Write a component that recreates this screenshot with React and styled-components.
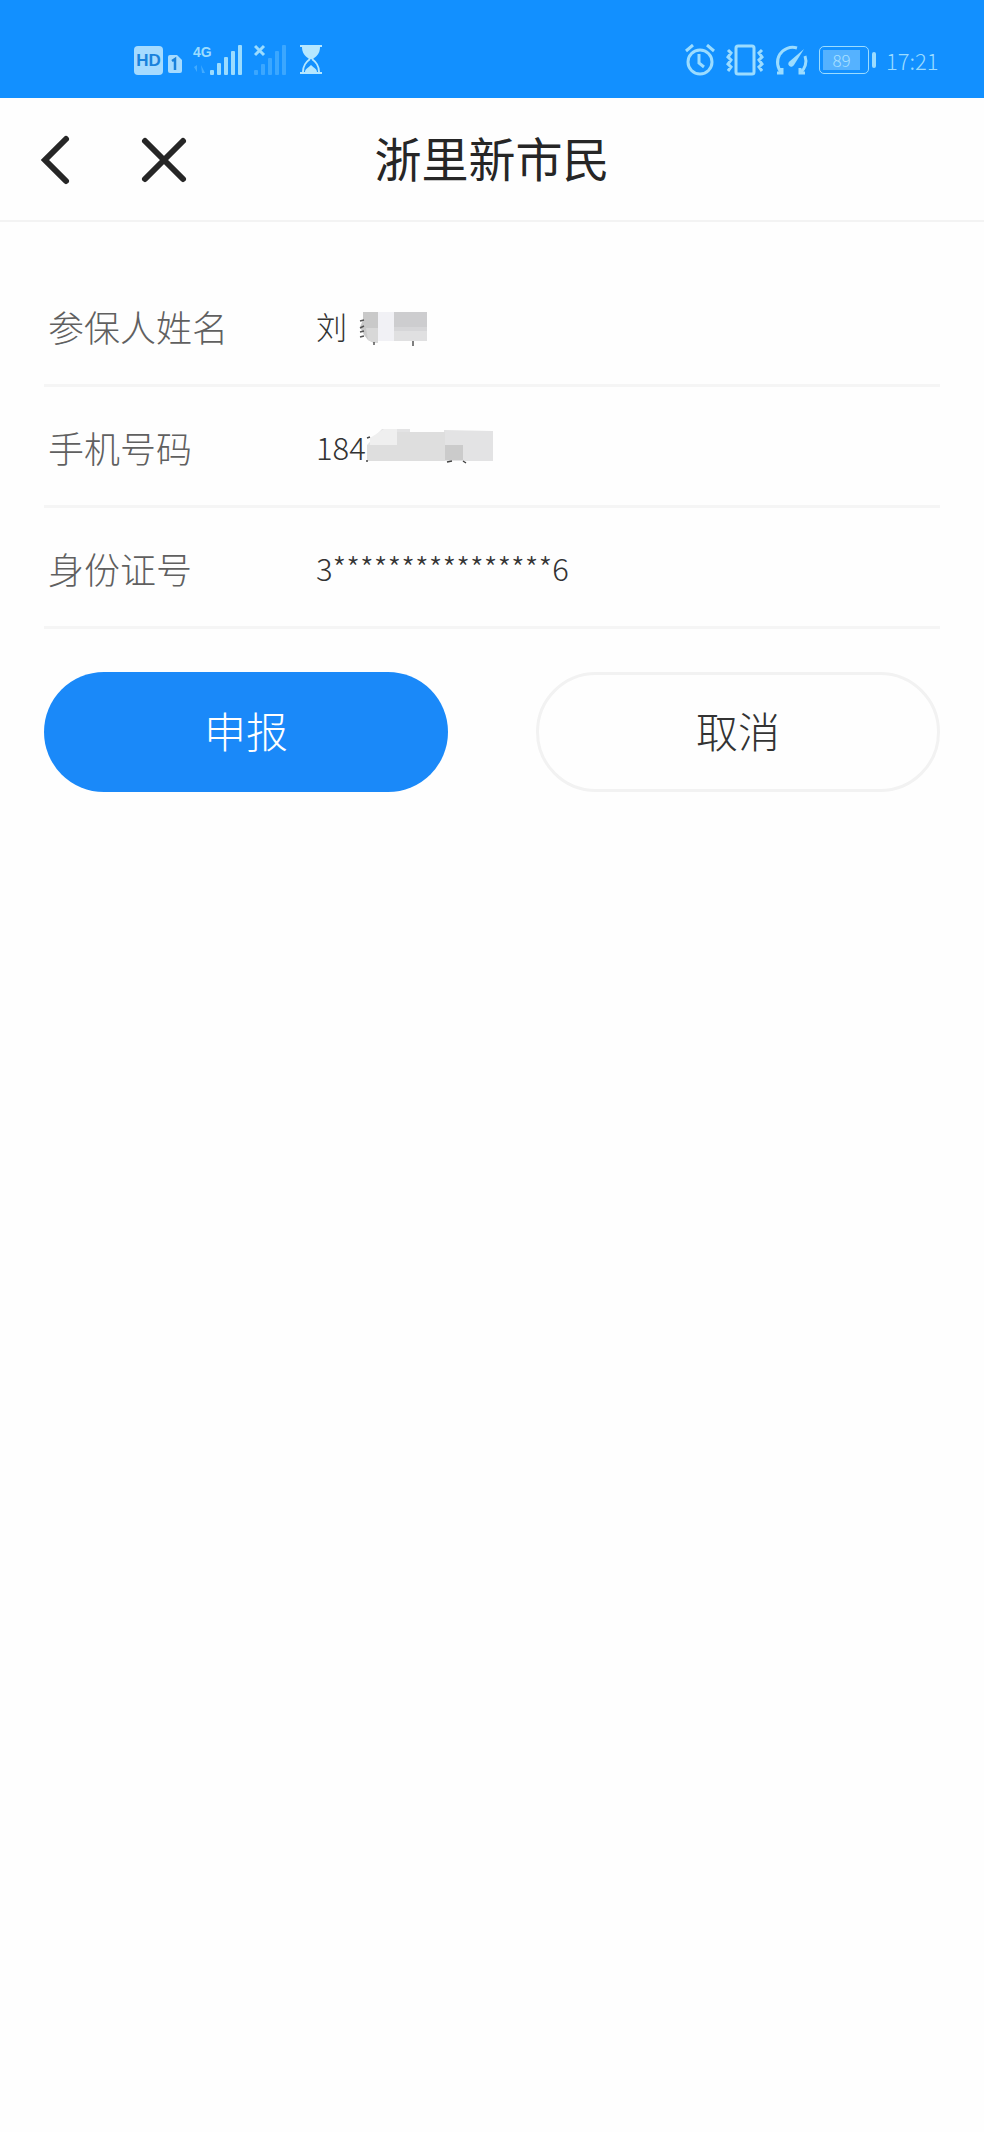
import React from 'react';
import styled, { createGlobalStyle } from 'styled-components';

const GlobalStyle = createGlobalStyle`
    * {
        box-sizing: border-box;
    }

    body {
        margin: 0;
        background-color: #fefefe;
        color: #262626;
        font-family: 'Noto Sans CJK SC', sans-serif;
    }
`;

const StatusBar = styled.div`
    display: flex;
    align-items: center;
    justify-content: space-between;
    height: 98px;
    padding: 22px 44px 0 134px;
    background-color: #1290ff;
    color: #9bdcff;

    svg {
        display: block;
    }
`;

const StatusGroup = styled.div`
    display: flex;
    align-items: center;
    gap: ${({ $gap }) => $gap}px;
`;

const HdBadge = styled.span`
    width: 29px;
    height: 29px;
    border-radius: 4px;
    background-color: #a5dbff;
    color: #1982dc;
    font-family: 'Liberation Sans', sans-serif;
    font-size: 17px;
    font-weight: 700;
    line-height: 30px;
    text-align: center;
`;

const Battery = styled.div`
    display: flex;
    align-items: center;
    gap: 3px;

    &::after {
        content: '';
        width: 4px;
        height: 16px;
        border-radius: 2px;
        background-color: #9bdcff;
    }
`;

const BatteryBody = styled.div`
    width: 50px;
    height: 28px;
    padding: 3px;
    border: 1px solid #9bdcff;
    border-radius: 5px;
`;

const BatteryLevel = styled.div`
    width: 37px;
    height: 20px;
    background-color: #55b2ff;
    color: #a9e0ff;
    font-size: 17px;
    font-weight: 300;
    line-height: 20px;
    text-align: center;
`;

const Time = styled.time`
    width: 54px;
    font-size: 22px;
    font-weight: 300;
    line-height: 30px;
`;

const Header = styled.header`
    display: grid;
    grid-template-columns: 1fr auto 1fr;
    align-items: center;
    height: 124px;
    padding: 0 36px;
    border-bottom: 2px solid #f3f3f3;
`;

const HeaderActions = styled.nav`
    display: flex;
    gap: 48px;
`;

const IconButton = styled.button`
    width: 56px;
    height: 56px;
    padding: 0;
    border: 0;
    background: none;
    color: #262626;

    svg {
        display: block;
    }
`;

const Title = styled.h1`
    margin: 0;
    padding-bottom: 4px;
    font-size: 47px;
    font-weight: 400;
    line-height: 60px;
`;

const Content = styled.main`
    padding: 44px;
`;

const Fields = styled.dl`
    margin: 0;
`;

const Field = styled.div`
    display: flex;
    align-items: center;
    height: 121px;
    padding-top: 2px;
    border-bottom: 3px solid #f5f5f5;
`;

const Label = styled.dt`
    width: 272px;
    padding-left: 4px;
    color: #606060;
    font-size: 36px;
    font-weight: 300;
    line-height: 48px;
`;

const Value = styled.dd`
    display: flex;
    align-items: center;
    margin: 0;
    color: #333;
    font-size: 31px;
    font-weight: 300;
    line-height: 48px;
`;

const Actions = styled.div`
    display: grid;
    grid-template-columns: 1fr 1fr;
    gap: 88px;
    margin-top: 43px;
`;

const Button = styled.button`
    height: 120px;
    padding: 0 0 6px;
    border: ${({ $primary }) => ($primary ? '0' : '3px solid #f2f2f2')};
    border-radius: 60px;
    background-color: ${({ $primary }) => ($primary ? '#1a89f9' : '#fefefe')};
    color: ${({ $primary }) => ($primary ? '#fff' : '#333')};
    font-family: inherit;
    font-size: 42px;
    font-weight: 300;
`;

const SimIcon = () => (
    <svg width="14" height="26" viewBox="0 0 14 26">
        <path d="M2 8h7l5 5v11a2 2 0 0 1-2 2H2a2 2 0 0 1-2-2V10a2 2 0 0 1 2-2z" fill="#a5dbff" />
        <path d="M4 14l3-2v11" fill="none" stroke="#1982dc" strokeWidth="2.500" />
    </svg>
);

const SignalIcon = () => (
    <svg width="50" height="32" viewBox="0 0 50 32" fill="currentColor">
        <text x="0" y="13" fontSize="14" fontWeight="700" fontFamily="Liberation Sans, sans-serif">
            4G
        </text>
        <path d="M1 23l3-2v7zM8 21l4 8h-3z" opacity="0.35" />
        <rect x="17" y="26" width="4" height="5" rx="1" />
        <rect x="24" y="19" width="4" height="12" rx="1" />
        <rect x="31" y="13" width="4" height="18" rx="1" />
        <rect x="38" y="7" width="4" height="24" rx="1" />
        <rect x="45" y="1" width="4" height="30" rx="1" />
    </svg>
);

const NoSignalIcon = () => (
    <svg width="33" height="32" viewBox="0 0 33 32" fill="currentColor">
        <path d="M1 2l9 9M10 2l-9 9" stroke="currentColor" strokeWidth="3" />
        <g opacity="0.3">
            <rect x="0" y="26" width="4" height="5" rx="1" />
            <rect x="7" y="20" width="4" height="11" rx="1" />
            <rect x="14" y="14" width="4" height="17" rx="1" />
            <rect x="21" y="7" width="4" height="24" rx="1" />
            <rect x="28" y="1" width="4" height="30" rx="1" />
        </g>
    </svg>
);

const HourglassIcon = () => (
    <svg width="26" height="30" viewBox="0 0 26 30" fill="#b5e7ff">
        <path d="M2 0h22v2H2zM2 27h22v2H2z" />
        <path d="M4 2h18c0 6-3 9-7 12h-4C7 11 4 8 4 2z" />
        <path d="M12 14c-4 3-7 6-7 13M14 14c4 3 7 6 7 13" fill="none" stroke="#b5e7ff" strokeWidth="2" />
        <path d="M7 27c0-3 3-4 6-7 3 3 6 4 6 7z" />
    </svg>
);

const AlarmIcon = () => (
    <svg width="31" height="32" viewBox="0 0 31 32" fill="none" stroke="currentColor" strokeWidth="3">
        <circle cx="15" cy="18" r="12" />
        <path d="M1 7l7-6M29 7l-7-6M14 10v9l5 4" />
    </svg>
);

const VibrateIcon = () => (
    <svg width="38" height="32" viewBox="0 0 38 32" fill="none" stroke="currentColor" strokeWidth="3">
        <rect x="10" y="2" width="18" height="28" rx="2" />
        <path d="M2 6l3 3-3 4 3 3-3 4 3 3-3 4M36 6l-3 3 3 4-3 3 3 4-3 3 3 4" />
    </svg>
);

const GaugeIcon = () => (
    <svg width="35" height="32" viewBox="0 0 35 32" fill="none" stroke="currentColor" strokeWidth="3">
        <path d="M3 29h5V24M8 29A15 15 0 0 1 23 4M31 29h-5V24M26 29A15 15 0 0 0 31 12" />
        <path d="M30 5L20 21a3 3 0 1 1-4-4z" fill="currentColor" stroke="none" />
    </svg>
);

const BackIcon = () => (
    <svg width="56" height="56" viewBox="0 0 56 56" fill="none" stroke="currentColor" strokeWidth="6">
        <path d="M30 8L9 29l21 21" strokeLinecap="round" />
    </svg>
);

const CloseIcon = () => (
    <svg width="56" height="56" viewBox="0 0 56 56" fill="none" stroke="currentColor" strokeWidth="6">
        <path d="M5 10l38 38M43 10L5 48" strokeLinecap="round" />
    </svg>
);

const NameMosaic = () => (
    <svg width="82" height="42" viewBox="-12 -6 82 42" aria-hidden="true">
        <path d="M4 1h15v31h-4l-6-3-4-5-4-8 3-7z" fill="#c9c9c9" />
        <path d="M7 17h12v15h-4l-6-3z" fill="#d8d8d8" />
        <rect x="19" y="1" width="16" height="29" fill="#f1f1f5" />
        <rect x="35" y="1" width="33" height="15" fill="#cdcdcf" />
        <rect x="35" y="16" width="33" height="4" fill="#d6d6d8" />
        <rect x="35" y="20" width="33" height="10" fill="#e0e0e1" />
        <path d="M1 10l4-1M1 17l4-2M1 21l4-1M1 26l4-1M15 31v3M54 30v5" stroke="#555" strokeWidth="1.500" />
    </svg>
);

const PhoneMosaic = () => (
    <svg width="130" height="44" viewBox="0 0 130 44" aria-hidden="true">
        <path d="M1 20L16 4h28v3h34V5l49 1v30H1z" fill="#e3e3e4" />
        <path d="M1 20h30V7h48v29H1z" fill="#dedede" />
        <path d="M4 20V13L18 4h13v16z" fill="#efefef" />
        <rect x="79" y="20" width="18" height="15" fill="#cbcbcb" />
        <path d="M1 13l3-1M0 36h2M81 37l5-1M97 36l3 2" stroke="#444" strokeWidth="1.500" />
    </svg>
);

const fields = [
    { label: '参保人姓名', value: '刘', mosaic: <NameMosaic /> },
    { label: '手机号码', value: '184', mosaic: <PhoneMosaic /> },
    { label: '身份证号', value: '3****************6' },
];

const App = () => (
    <>
        <GlobalStyle />
        <StatusBar>
            <StatusGroup $gap={11}>
                <StatusGroup $gap={5}>
                    <HdBadge>HD</HdBadge>
                    <SimIcon />
                </StatusGroup>
                <SignalIcon />
                <NoSignalIcon />
                <HourglassIcon />
            </StatusGroup>
            <StatusGroup $gap={10}>
                <AlarmIcon />
                <VibrateIcon />
                <GaugeIcon />
                <Battery>
                    <BatteryBody>
                        <BatteryLevel>89</BatteryLevel>
                    </BatteryBody>
                </Battery>
                <Time>17:21</Time>
            </StatusGroup>
        </StatusBar>
        <Header>
            <HeaderActions>
                <IconButton type="button" aria-label="返回">
                    <BackIcon />
                </IconButton>
                <IconButton type="button" aria-label="关闭">
                    <CloseIcon />
                </IconButton>
            </HeaderActions>
            <Title>浙里新市民</Title>
        </Header>
        <Content>
            <Fields>
                {fields.map(({ label, value, mosaic }) => (
                    <Field key={label}>
                        <Label>{label}</Label>
                        <Value>
                            {value}
                            {mosaic}
                        </Value>
                    </Field>
                ))}
            </Fields>
            <Actions>
                <Button type="button" $primary>
                    申报
                </Button>
                <Button type="button">取消</Button>
            </Actions>
        </Content>
    </>
);

export default App;
